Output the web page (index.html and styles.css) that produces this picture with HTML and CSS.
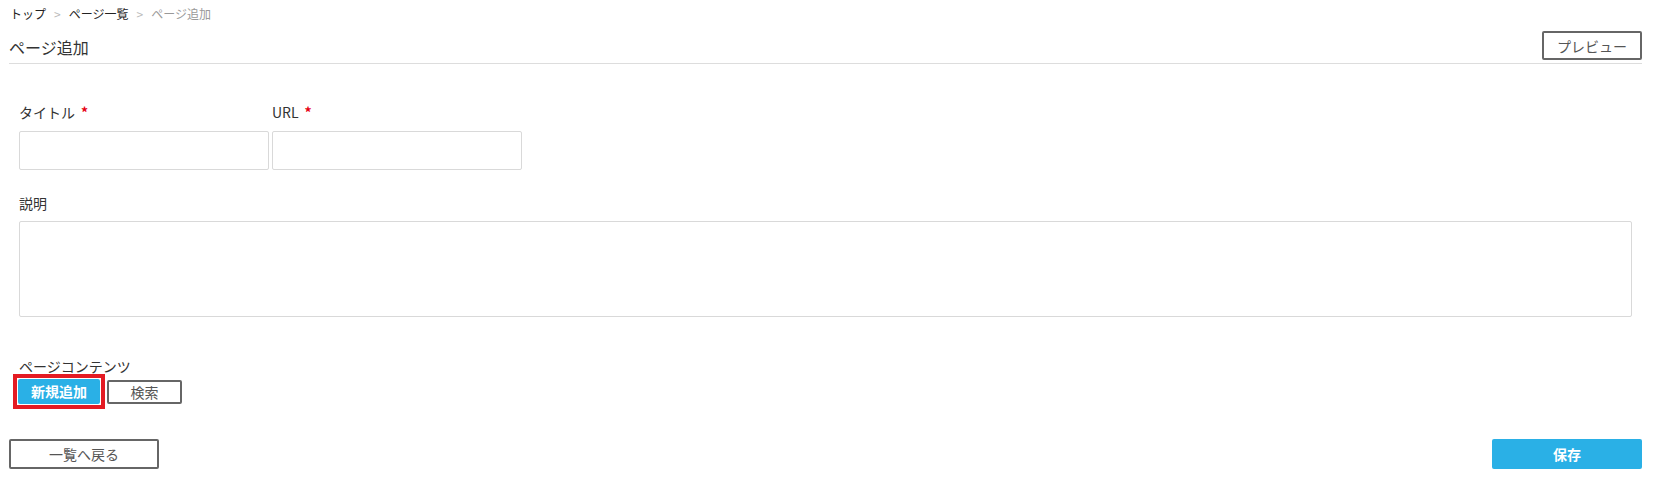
FILE: index.html
```html
<!DOCTYPE html>
<html lang="ja">
<head>
<meta charset="utf-8">
<title>ページ追加</title>
<link rel="stylesheet" href="styles.css">
</head>
<body>
<div class="page">
  <nav class="breadcrumb">
    <a class="crumb">トップ</a>
    <span class="sep">&gt;</span>
    <a class="crumb">ページ一覧</a>
    <span class="sep">&gt;</span>
    <span class="current">ページ追加</span>
  </nav>
  <header class="page-header">
    <h1 class="page-title">ページ追加</h1>
    <button class="btn btn-outline btn-preview">プレビュー</button>
  </header>
  <form class="form">
    <div class="row">
      <div class="field">
        <label class="label">タイトル<span class="req">*</span></label>
        <input class="input" type="text">
      </div>
      <div class="field">
        <label class="label">URL<span class="req">*</span></label>
        <input class="input" type="text">
      </div>
    </div>
    <div class="field field-desc">
      <label class="label">説明</label>
      <textarea class="textarea"></textarea>
    </div>
    <div class="field field-contents">
      <label class="label">ページコンテンツ</label>
      <div class="btn-group">
        <span class="highlight">
          <button type="button" class="btn btn-primary btn-small">新規追加</button>
        </span>
        <button type="button" class="btn btn-outline btn-small btn-search">検索</button>
      </div>
    </div>
  </form>
  <footer class="actions">
    <button class="btn btn-outline btn-wide">一覧へ戻る</button>
    <button class="btn btn-primary btn-wide">保存</button>
  </footer>
</div>
</body>
</html>
```
FILE: styles.css
```css
* { box-sizing: border-box; }
html, body { margin: 0; background: #fff; }
body {
  font-family: "Noto Sans CJK JP", "Noto Sans", sans-serif;
  color: #333;
}
.page {
  padding: 0 15px 0 9px;
}
.breadcrumb {
  font-size: 12px;
  line-height: 16px;
  padding: 6px 0 0 1px;
  display: flex;
  gap: 8px;
}
.crumb { color: #222; }
.sep { color: #bbb; }
.current { color: #999; }

.page-header {
  display: flex;
  justify-content: space-between;
  align-items: center;
  border-bottom: 1px solid #ddd;
  margin-top: 9px;
  padding-bottom: 3px;
}
.page-title {
  margin: 0;
  font-size: 16px;
  font-weight: normal;
  line-height: 22px;
  color: #333;
  padding-top: 3px;
}
.btn {
  font-family: inherit;
  font-size: 14px;
  cursor: pointer;
  border-radius: 2px;
}
.btn-outline {
  background: #fff;
  border: 2px solid #666;
  color: #555;
}
.btn-primary {
  background: #2ab0e6;
  border: none;
  color: #fff;
  font-weight: bold;
}
.btn-preview {
  width: 100px;
  height: 29px;
  padding: 0;
}
.form {
  padding: 0 10px 0 10px;
}
.row {
  display: flex;
  gap: 3px;
  margin-top: 38px;
}
.field {
  display: flex;
  flex-direction: column;
}
.label {
  font-size: 14px;
  line-height: 20px;
  margin-bottom: 9px;
  color: #333;
}
.req {
  color: #e60012;
  margin-left: 6px;
  font-weight: bold;
  font-size: 14px;
}
.input {
  width: 250px;
  height: 39px;
  border: 1px solid #d9d9d9;
  border-radius: 2px;
  font-family: inherit;
}
.field-desc { margin-top: 23px; }
.field-desc .label { margin-bottom: 8px; }
.textarea {
  width: 100%;
  height: 96px;
  border: 1px solid #d9d9d9;
  border-radius: 2px;
  resize: none;
  font-family: inherit;
  display: block;
}
.field-contents { margin-top: 41px; }
.field-contents .label { margin-bottom: 0; line-height: 16px; }
.btn-group {
  display: flex;
  align-items: center;
  gap: 2px;
  padding-top: 0;
  margin-left: -6px;
}
.highlight {
  display: inline-flex;
  border: 4px solid #e41b23;
  padding: 1px;
}
.btn-small {
  height: 25px;
  padding: 0;
  line-height: 21px;
  display: block;
}
.btn-primary.btn-small { width: 82px; }
.btn-search { width: 75px; height: 24px; }
.actions {
  display: flex;
  justify-content: space-between;
  margin-top: 30px;
}
.btn-wide {
  width: 150px;
  height: 30px;
  padding: 0;
}
```
